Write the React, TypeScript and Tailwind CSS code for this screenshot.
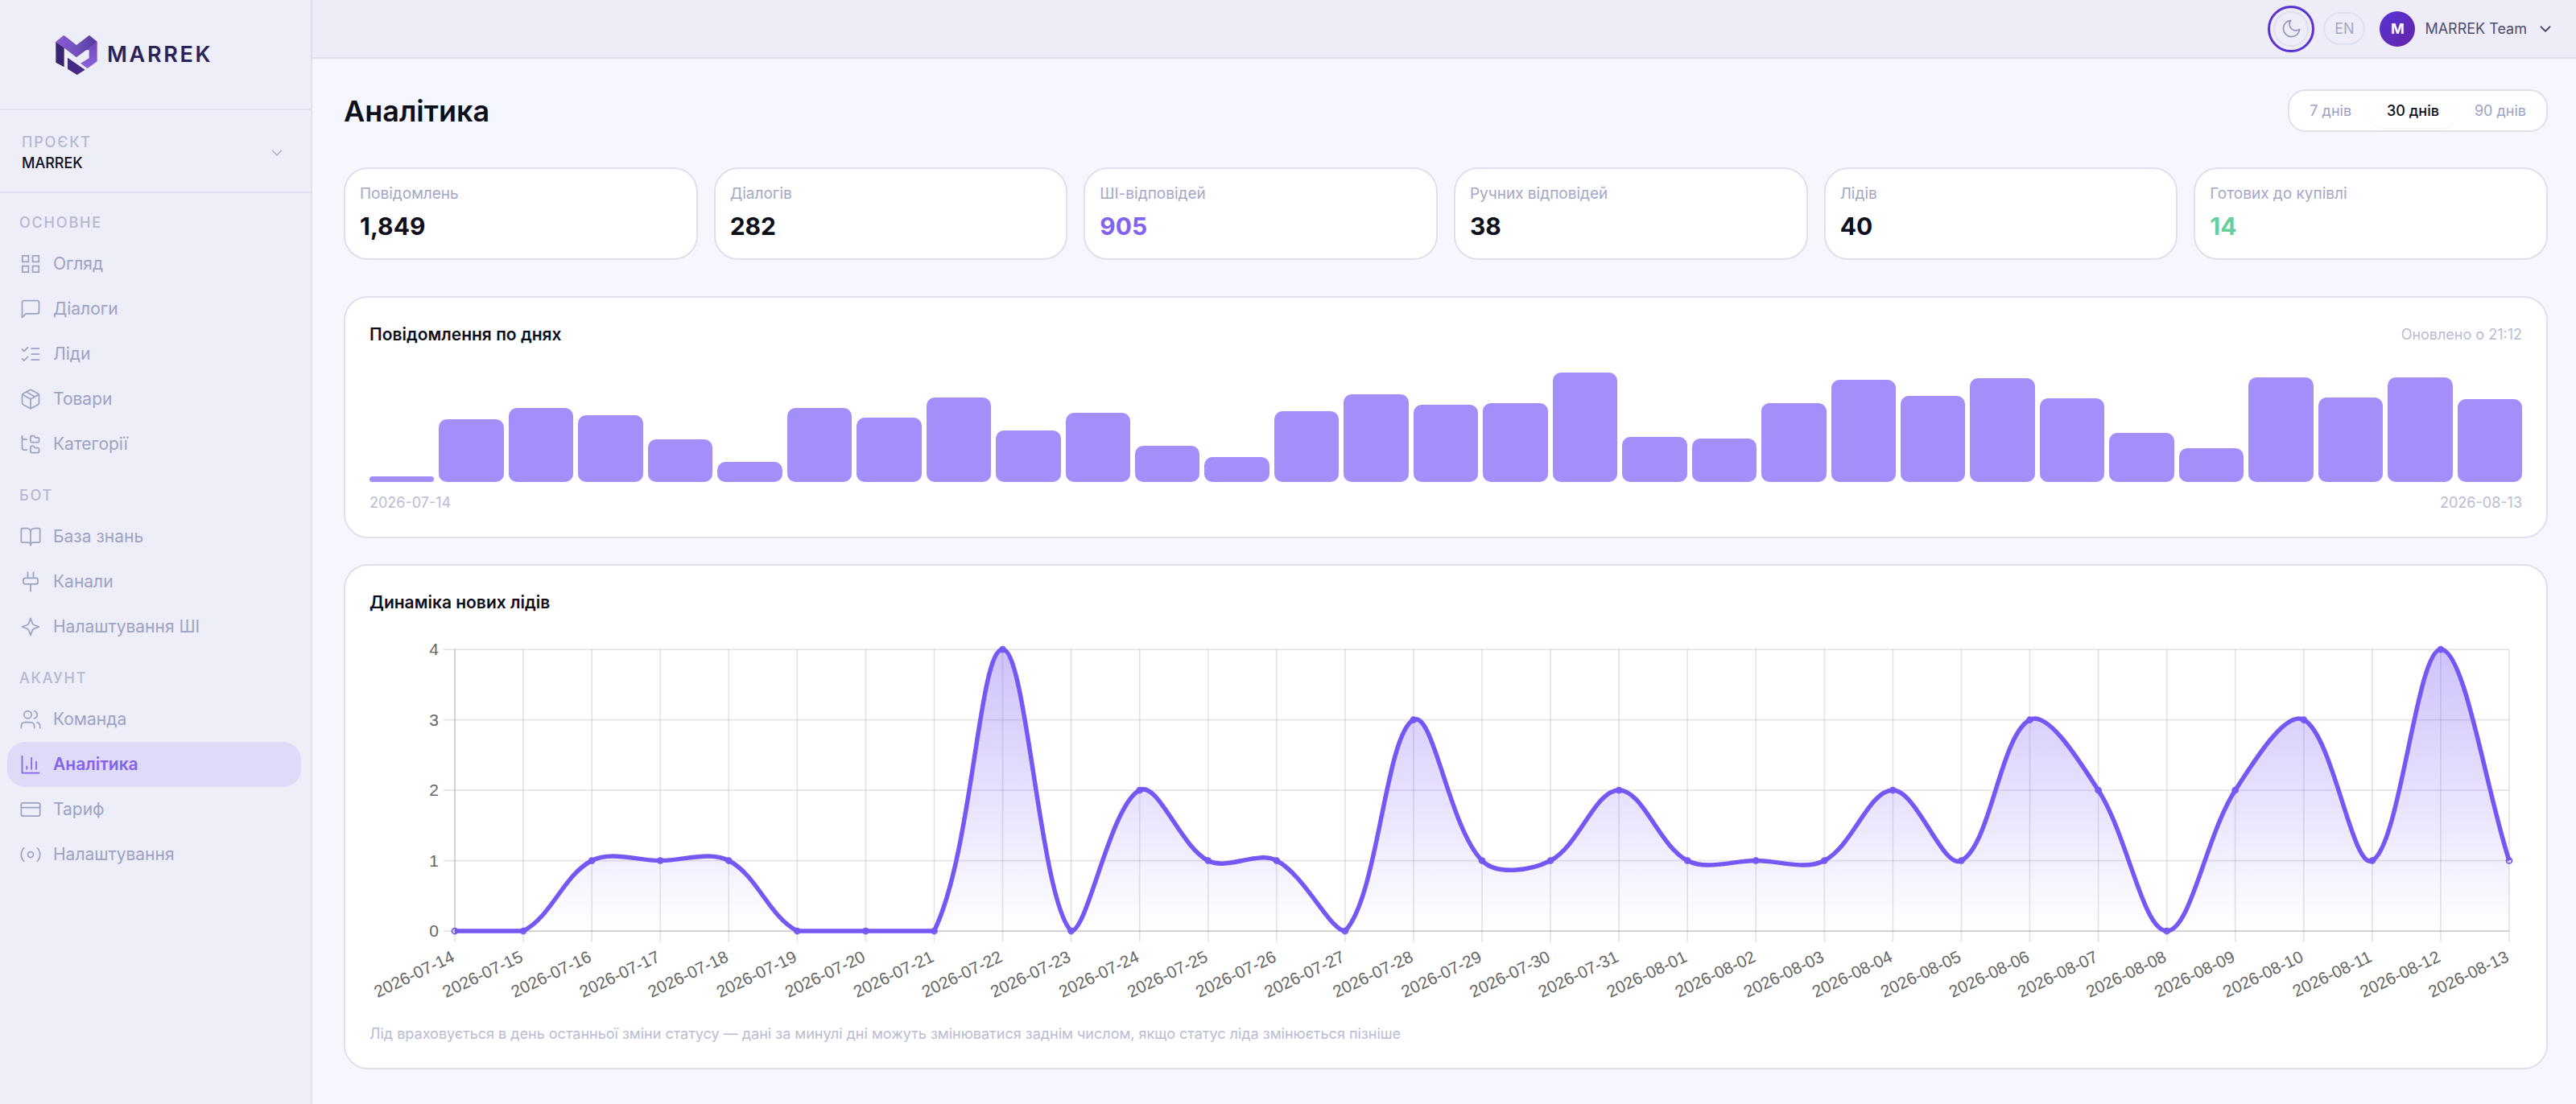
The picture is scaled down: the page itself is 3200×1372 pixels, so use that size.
import { useState, type ReactNode } from "react";
import { clsx } from "clsx";
import {
  BookOpen,
  ChevronDown,
  CreditCard,
  FolderTree,
  Package,
  Users,
} from "lucide-react";

const Icon = ({ children, className = "size-7" }: { children: ReactNode; className?: string }) => (
  <svg
    className={clsx("shrink-0", className)}
    viewBox="0 0 24 24"
    fill="none"
    stroke="currentColor"
    strokeWidth={1.5}
    strokeLinecap="round"
    strokeLinejoin="round"
    aria-hidden="true"
  >
    {children}
  </svg>
);

const lucide = { className: "size-7 shrink-0", strokeWidth: 1.5 };

const sections = [
  {
    title: "ОСНОВНЕ",
    items: [
      {
        label: "Огляд",
        icon: (
          <Icon>
            <path strokeLinejoin="miter" d="M3.25 3.25h6.5v6.5h-6.5zM14.25 3.25h6.5v6.5h-6.5zM3.25 14.25h6.5v6.5h-6.5zM14.25 14.25h6.5v6.5h-6.5z" />
          </Icon>
        ),
      },
      {
        label: "Діалоги",
        icon: (
          <Icon>
            <path d="M21 15a2 2 0 0 1-2 2H7l-4 4V5a2 2 0 0 1 2-2h14a2 2 0 0 1 2 2z" />
          </Icon>
        ),
      },
      {
        label: "Ліди",
        icon: (
          <Icon>
            <path d="m3 17 2 2 4-4M3 7l2 2 4-4M13 6h8M13 12h8M13 18h8" />
          </Icon>
        ),
      },
      { label: "Товари", icon: <Package {...lucide} /> },
      { label: "Категорії", icon: <FolderTree {...lucide} /> },
    ],
  },
  {
    title: "БОТ",
    items: [
      { label: "База знань", icon: <BookOpen {...lucide} /> },
      {
        label: "Канали",
        icon: (
          <Icon>
            <path d="M9 2v6M15 2v6M12 14.5V22" />
            <rect x="4.25" y="8" width="15.5" height="6.5" rx="2" />
          </Icon>
        ),
      },
      {
        label: "Налаштування ШІ",
        icon: (
          <Icon>
            <path d="m12 3 1.9 5.1a3.3 3.3 0 0 0 2 2L21 12l-5.1 1.9a3.3 3.3 0 0 0-2 2L12 21l-1.9-5.1a3.3 3.3 0 0 0-2-2L3 12l5.1-1.9a3.3 3.3 0 0 0 2-2z" />
          </Icon>
        ),
      },
    ],
  },
  {
    title: "АКАУНТ",
    items: [
      { label: "Команда", icon: <Users {...lucide} /> },
      {
        label: "Аналітика",
        active: true,
        icon: (
          <Icon>
            <path d="M3 3v18h18M18 17V9M13 17V5M8 17v-3" />
          </Icon>
        ),
      },
      { label: "Тариф", icon: <CreditCard {...lucide} /> },
      {
        label: "Налаштування",
        icon: (
          <Icon>
            <circle cx="12" cy="12" r="3" />
            <path d="M19.07 4.93a10 10 0 0 1 0 14.14M4.93 4.93a10 10 0 0 0 0 14.14" />
          </Icon>
        ),
      },
    ],
  },
];

const stats = [
  { label: "Повідомлень", value: "1,849", color: "text-[#0e0f1c]" },
  { label: "Діалогів", value: "282", color: "text-[#0e0f1c]" },
  { label: "ШІ-відповідей", value: "905", color: "text-[#8262ee]" },
  { label: "Ручних відповідей", value: "38", color: "text-[#0e0f1c]" },
  { label: "Лідів", value: "40", color: "text-[#0e0f1c]" },
  { label: "Готових до купівлі", value: "14", color: "text-[#68cf9c]" },
];

const messages = [
  7, 78, 92, 83, 53, 25, 92, 80, 105, 64, 86, 45, 31, 88, 109, 96, 98, 136, 56,
  54, 98, 127, 107, 129, 104, 61, 42, 130, 105, 130, 103,
];

const leads = [
  0, 0, 1, 1, 1, 0, 0, 0, 4, 0, 2, 1, 1, 0, 3, 1, 1, 2, 1, 1, 1, 2, 1, 3, 2, 0,
  2, 3, 1, 4, 1,
];

const days = leads.map((_, i) =>
  new Date(Date.UTC(2026, 6, 14 + i)).toISOString().slice(0, 10)
);

const ranges = ["7 днів", "30 днів", "90 днів"];

function Logo() {
  return (
    <a href="#" className="flex items-center gap-[10px] text-[#2c2257]">
      <svg className="h-[54px] w-[56px]" viewBox="201 125 168 162" aria-hidden="true">
        <defs>
          <linearGradient id="logo-v" x1="0" x2="1">
            <stop offset="0" stopColor="#8a5cd0" />
            <stop offset="0.5" stopColor="#7450c0" />
            <stop offset="1" stopColor="#523a98" />
          </linearGradient>
          <linearGradient id="logo-side" x1="0" x2="0" y1="0" y2="1">
            <stop offset="0" stopColor="#7347bb" />
            <stop offset="1" stopColor="#8a63d6" />
          </linearGradient>
        </defs>
        <path fill="#3a2570" d="M208 157 239 180V252L208 235Z" />
        <path fill="url(#logo-side)" d="M362 157V231L326 257 300 238 332 219V188L310 190Z" />
        <path fill="url(#logo-v)" d="M208 157 238 133 285 170 333 133 362 157 285 216Z" />
        <path fill="#432c82" d="M252 217 317 262 287 281 252 259Z" />
      </svg>
      <span className="text-[27px] leading-8 font-semibold tracking-widest">MARREK</span>
    </a>
  );
}

function Sidebar() {
  return (
    <aside className="w-[388px] shrink-0 border-r-2 border-[#dfdfee] bg-[#eeeef8]">
      <div className="flex h-[137px] items-center border-b-2 border-[#dfdfee] px-[67px]">
        <Logo />
      </div>
      <button className="flex h-[103px] w-full items-center justify-between border-b-2 border-[#dfdfee] pt-1 pr-[31px] pl-[27px] text-left">
        <span className="flex flex-col">
          <span className="text-lg leading-[26px] font-medium tracking-widest text-[#b5b8d1]">ПРОЄКТ</span>
          <span className="text-lg leading-[26px] font-medium text-[#0e0f1c]">MARREK</span>
        </span>
        <ChevronDown className="size-[22px] text-[#a9adc9]" strokeWidth={1.5} />
      </button>
      <nav className="flex flex-col gap-6 pt-[25px] pr-3 pl-[9px]">
        {sections.map((section) => (
          <div key={section.title}>
            <h2 className="mb-[11px] pl-[15px] text-lg leading-6 font-medium tracking-widest text-[#b5b8d1]">
              {section.title}
            </h2>
            {section.items.map((item) => (
              <a
                key={item.label}
                href="#"
                className={clsx(
                  "flex h-14 items-center gap-[14px] rounded-[22px] px-[15px] text-[21px]",
                  item.active
                    ? "bg-[#dfdbf6] font-semibold text-[#8363ee]"
                    : "text-[#9da3c3]"
                )}
              >
                {item.icon}
                {item.label}
              </a>
            ))}
          </div>
        ))}
      </nav>
    </aside>
  );
}

function Header() {
  return (
    <header className="flex h-[73px] items-center justify-end gap-[18px] border-b-2 border-[#dfdfee] bg-[#edecf7] pr-[27px]">
      <button
        aria-label="Темна тема"
        className="flex size-11 items-center justify-center rounded-full border-2 border-[#e0e1ee] text-[#9299bb] outline-3 outline-offset-4 outline-[#5932d2]"
      >
        <Icon className="size-[27px]">
          <path d="M21 12.79A9 9 0 1 1 11.21 3 7 7 0 0 0 21 12.79z" />
        </Icon>
      </button>
      <button className="h-[41px] w-[52px] rounded-full border-2 border-[#e0e1ee] text-lg text-[#a3a8c5]">
        EN
      </button>
      <button className="flex items-center gap-3">
        <span className="flex size-11 items-center justify-center rounded-full bg-linear-to-br from-[#5533d8] to-[#6423a5] text-lg font-bold text-white">
          M
        </span>
        <span className="text-lg text-[#4a4d70]">MARREK Team</span>
        <ChevronDown className="size-[22px] text-[#4a4d70]" strokeWidth={2} />
      </button>
    </header>
  );
}

function MessagesChart() {
  const max = Math.max(...messages);
  return (
    <section className="rounded-[30px] border-2 border-[#dfdfee] bg-white px-[30px] pt-8 pb-7">
      <div className="flex h-7 items-center justify-between">
        <h2 className="text-[21px] font-semibold text-[#0e0f1c]">Повідомлення по днях</h2>
        <span className="text-lg text-[#b9bcd4]">Оновлено о 21:12</span>
      </div>
      <div className="mt-[33px] flex h-[136px] items-end gap-[6px]">
        {messages.map((value, i) => (
          <div
            key={days[i]}
            title={days[i]}
            className="flex-1 rounded-[10px] bg-[#a48ffa]"
            style={{ height: `${(value / max) * 100}%` }}
          />
        ))}
      </div>
      <div className="mt-3 flex justify-between text-lg text-[#b9bcd4]">
        <span>{days[0]}</span>
        <span>{days[days.length - 1]}</span>
      </div>
    </section>
  );
}

// plot area inside the chart's viewBox
const plot = { left: 106, right: 2658, top: 17, bottom: 367 };
const tension = 0.35;

const points = leads.map((value, i) => ({
  x: plot.left + (i * (plot.right - plot.left)) / (leads.length - 1),
  y: plot.bottom - (value * (plot.bottom - plot.top)) / 4,
}));

const clampY = (y: number) => Math.min(plot.bottom, Math.max(plot.top, y));

// bezier handles before and after a point
function handles(i: number) {
  const cur = points[i];
  const prev = points[i - 1] ?? cur;
  const next = points[i + 1] ?? cur;
  const d1 = Math.hypot(cur.x - prev.x, cur.y - prev.y);
  const d2 = Math.hypot(next.x - cur.x, next.y - cur.y);
  const a = (tension * d1) / (d1 + d2);
  const b = (tension * d2) / (d1 + d2);
  return {
    before: [cur.x - a * (next.x - prev.x), clampY(cur.y - a * (next.y - prev.y))],
    after: [cur.x + b * (next.x - prev.x), clampY(cur.y + b * (next.y - prev.y))],
  };
}

const linePath = points
  .map((p, i) =>
    i === 0
      ? `M${p.x} ${p.y}`
      : `C${handles(i - 1).after} ${handles(i).before} ${p.x} ${p.y}`
  )
  .join("");

function LeadsChart() {
  return (
    <section className="rounded-[30px] border-2 border-[#dfdfee] bg-white px-[30px] pt-8 pb-7">
      <h2 className="text-[21px] leading-7 font-semibold text-[#0e0f1c]">Динаміка нових лідів</h2>
      <svg
        className="mt-[27px] block h-auto w-full font-['Liberation_Sans',sans-serif]"
        viewBox="0 0 2674 460"
        role="img"
        aria-label="Динаміка нових лідів"
      >
        <defs>
          <linearGradient id="leads-fill" gradientUnits="userSpaceOnUse" x1="0" x2="0" y1={plot.top} y2={plot.bottom}>
            <stop offset="0" stopColor="#7557f3" stopOpacity="0.36" />
            <stop offset="1" stopColor="#7557f3" stopOpacity="0" />
          </linearGradient>
        </defs>
        <g stroke="#000" strokeOpacity="0.1" strokeWidth="1.75">
          {[0, 1, 2, 3, 4].map((v) => {
            const y = plot.bottom - (v * (plot.bottom - plot.top)) / 4;
            return <line key={v} x1={plot.left - 14} x2={plot.right} y1={y} y2={y} />;
          })}
          {points.map((p) => (
            <line key={p.x} x1={p.x} x2={p.x} y1={plot.top} y2={plot.bottom + 14} />
          ))}
          <path fill="none" d={`M${plot.left} ${plot.top}V${plot.bottom}H${plot.right}`} />
        </g>
        <path d={`${linePath}V${plot.bottom}H${plot.left}Z`} fill="url(#leads-fill)" />
        <path d={linePath} fill="none" stroke="#7557f3" strokeWidth="5.5" strokeLinejoin="round" />
        {points.map((p) => (
          <circle key={p.x} cx={p.x} cy={p.y} r="3.5" fill="#7557f3" fillOpacity="0.1" stroke="#7557f3" strokeWidth="1.75" />
        ))}
        <g fill="#666" fontSize="21" textAnchor="end">
          {[0, 1, 2, 3, 4].map((v) => (
            <text key={v} x={plot.left - 20} y={plot.bottom + 7 - (v * (plot.bottom - plot.top)) / 4}>
              {v}
            </text>
          ))}
          {points.map((p, i) => (
            <text key={days[i]} transform={`translate(${p.x + 1} ${plot.bottom + 37}) rotate(-25.5)`}>
              {days[i]}
            </text>
          ))}
        </g>
      </svg>
      <p className="mt-[21px] text-lg text-[#b9bcd4]">
        Лід враховується в день останньої зміни статусу — дані за минулі дні можуть змінюватися заднім числом, якщо статус ліда змінюється пізніше
      </p>
    </section>
  );
}

export default function App() {
  const [range, setRange] = useState("30 днів");

  return (
    <div className="flex min-h-screen bg-[#f6f7fe] font-[Inter,sans-serif]">
      <Sidebar />
      <div className="flex min-w-0 flex-1 flex-col">
        <Header />
        <main className="pt-[38px] pr-[35px] pb-10 pl-[39px]">
          <div className="flex items-center justify-between">
            <h1 className="text-[36px] leading-[48px] font-semibold text-[#0e0f1c]">Аналітика</h1>
            <div className="flex h-[53px] rounded-[22px] border-2 border-[#dfdfee] bg-white p-[3px]">
              {ranges.map((item) => (
                <button
                  key={item}
                  aria-pressed={item === range}
                  onClick={() => setRange(item)}
                  className={clsx(
                    "rounded-[18px] px-[22px] text-lg",
                    item === range ? "font-medium text-[#0e0f1c] shadow-xs" : "text-[#9da3c3]"
                  )}
                >
                  {item}
                </button>
              ))}
            </div>
          </div>
          <div className="mt-11 grid grid-cols-6 gap-5">
            {stats.map((stat) => (
              <div key={stat.label} className="h-[115px] rounded-[30px] border-2 border-[#dfdfee] bg-white px-[18px] pt-[17px]">
                <div className="text-[19px] leading-7 text-[#a3a8c8]">{stat.label}</div>
                <div className={clsx("mt-2 text-[30px] leading-9 font-bold", stat.color)}>{stat.value}</div>
              </div>
            ))}
          </div>
          <div className="mt-[45px] flex flex-col gap-8">
            <MessagesChart />
            <LeadsChart />
          </div>
        </main>
      </div>
    </div>
  );
}
